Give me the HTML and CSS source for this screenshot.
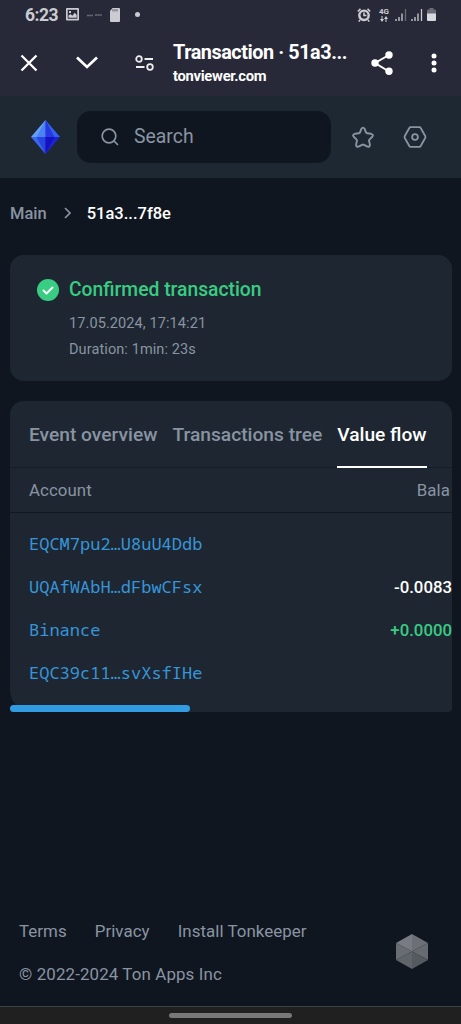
FILE: index.html
```html
<!DOCTYPE html>
<html lang="en">
<head>
  <meta charset="UTF-8" />
  <meta name="viewport" content="width=device-width, initial-scale=1.0"/>
  <title>Transaction · 51a3...7f8e</title>
  <link rel="stylesheet" href="styles.css">
</head>
<body>
  <div class="browser">
    <div class="status-bar">
      <span class="time">6:23</span>
      <svg class="picture" width="13" height="13" viewBox="0 0 13 13">
        <path fill="#cbccd2" fill-rule="evenodd" d="M1 0h11a1 1 0 0 1 1 1v10.500a1 1 0 0 1-1 1H1a1 1 0 0 1-1-1V1a1 1 0 0 1 1-1zM1.700 1.700v9h9.600v-9z"/>
        <path fill="#cbccd2" d="M2.500 9.800V7.500l2-1.500 1.800 1.800 2.500-3L10.700 7v2.800zM3 3h2v2H3z"/>
      </svg>
      <svg class="dashes" width="15" height="4" viewBox="0 0 15 4">
        <path d="M0 2.500h6M8 2h7" stroke="#6b6c77" stroke-width="1.500" stroke-dasharray="2 .3"/>
      </svg>
      <svg class="sd-card" width="10" height="14" viewBox="0 0 10 14">
        <path fill="#cbccd2" d="M2.500 0H9a1 1 0 0 1 1 1v12a1 1 0 0 1-1 1H1a1 1 0 0 1-1-1V3z"/>
        <path d="M3 1v2.500M5 1v2.500M7 1v2.500" stroke="#63646f" stroke-width="1"/>
      </svg>
      <span class="dot"></span>
      <div class="status-right">
        <svg width="14" height="14" viewBox="0 0 14 14" fill="none" stroke="#cbccd2">
          <circle cx="7" cy="7.300" r="4.700" stroke-width="2.400"/>
          <path d="M7 4.500v3h2.500M.8 3.500 3.500.9M13.200 3.500 10.500.9M3 12l-1.200 1.500M11 12l1.200 1.500" stroke-width="1.600"/>
        </svg>
        <div class="network">
          <span>4G</span>
          <svg width="8" height="6" viewBox="0 0 8 6" fill="#cbccd2">
            <path d="M1.500 0h1v3H4L2 6 0 3h1.500zM5.500 6h1V3H8L6 0 4 3h1.500z"/>
          </svg>
        </div>
        <svg width="12" height="12" viewBox="0 0 12 12" stroke="#cbccd2" stroke-width="1.300">
          <path d="M1 12v-2M4 12V8M7 12V4.500"/><path d="M10.500 12V0" stroke="#6b6c77"/>
        </svg>
        <svg width="12" height="12" viewBox="0 0 12 12" stroke="#cbccd2" stroke-width="1.300">
          <path d="M1 12v-2M4 12V8M7 12V4.500M10.500 12V0"/>
        </svg>
        <svg class="battery" width="9" height="13" viewBox="0 0 9 13">
          <path fill="#6b6c77" d="M2.500 0h4v1.500H8a1 1 0 0 1 1 1V6H0V2.500a1 1 0 0 1 1-1h1.500z"/>
          <path fill="#d8d9de" d="M0 5.500h9V12a1 1 0 0 1-1 1H1a1 1 0 0 1-1-1z"/>
        </svg>
      </div>
    </div>
    <div class="toolbar">
      <svg class="close" width="18" height="18" viewBox="0 0 18 18" stroke="#fff" stroke-width="2.300">
        <path d="M1.500 1.500l15 15M16.500 1.500l-15 15"/>
      </svg>
      <svg class="collapse" width="22" height="13" viewBox="0 0 22 13" fill="none" stroke="#fff" stroke-width="2.700">
        <path d="M1 1.500l10 9.500 10-9.500"/>
      </svg>
      <svg class="site-settings" width="19" height="16" viewBox="0 0 19 16" fill="none" stroke="#eeeef1" stroke-width="1.800">
        <circle cx="4" cy="4" r="2.800"/><circle cx="15" cy="12" r="2.800"/>
        <path d="M9.500 4H18M1 12h8.500"/>
      </svg>
      <div class="page-info">
        <div class="page-title">Transaction · 51a3...</div>
        <div class="page-host">tonviewer.com</div>
      </div>
      <svg class="share" width="22" height="24" viewBox="0 0 22 24" fill="#fff">
        <path d="M18 4 4 12l14 8.500" fill="none" stroke="#fff" stroke-width="2"/>
        <circle cx="18" cy="4" r="3.700"/><circle cx="4" cy="12" r="3.700"/><circle cx="18" cy="20.200" r="3.700"/>
      </svg>
      <svg class="more" width="6" height="20" viewBox="0 0 6 20" fill="#fff">
        <circle cx="3" cy="3" r="2.500"/><circle cx="3" cy="10" r="2.500"/><circle cx="3" cy="17" r="2.500"/>
      </svg>
    </div>
  </div>

  <header class="header">
    <svg class="logo" width="29" height="34" viewBox="0 0 29 34">
      <path fill="#66a0f5" d="M14.500 0v17H0z"/>
      <path fill="#3263f0" d="M14.500 0 29 17H14.500z"/>
      <path fill="#3768ef" d="M0 17h14.500v17z"/>
      <path fill="#1c25cd" d="M29 17H14.500v17z"/>
      <path fill="#4b82f5" d="M14.500 0v17h-9z"/>
      <path fill="#2538e2" d="M14.500 0v17h9z"/>
      <path fill="#2846df" d="M5.500 17h9v17z"/>
      <path fill="#1711c5" d="M23.500 17h-9v17z"/>
    </svg>
    <div class="search">
      <svg width="18" height="18" viewBox="0 0 18 18" fill="none" stroke="#8994a3" stroke-width="1.700" stroke-linecap="round">
        <circle cx="8" cy="8" r="6.800"/><path d="M13 13l3.500 3.500"/>
      </svg>
      <span>Search</span>
    </div>
    <svg class="star" width="24" height="23" viewBox="0 0 24 23" fill="none" stroke="#8994a3" stroke-width="1.900" stroke-linejoin="round">
      <path d="M10.400 2.800Q12 .4 13.600 2.800L15 6.400Q15.300 7.200 16.200 7.300L20.100 7.800Q22.900 8.500 21.300 10.800L18.400 13.600Q17.900 14.200 18.100 15L18.900 18.600Q19 21.300 16.500 20.700L13 18.800Q12 18.300 11 18.800L7.500 20.700Q5 21.300 5.100 18.600L5.900 15Q6.100 14.200 5.600 13.600L2.700 10.800Q1.100 8.500 3.900 7.800L7.800 7.300Q8.700 7.200 9 6.400Z"/>
    </svg>
    <svg class="settings" width="24" height="22" viewBox="0 0 24 22" fill="none" stroke="#8994a3" stroke-width="1.800" stroke-linejoin="round">
      <path d="M7.500 1.200h9q.8 0 1.200.8l4.500 8q.5 1 0 2l-4.500 8q-.4.800-1.200.8h-9q-.8 0-1.200-.8L1.800 12q-.5-1 0-2l4.500-8q.4-.8 1.200-.8z"/>
      <circle cx="12" cy="11" r="2.900"/>
    </svg>
  </header>

  <main class="content">
    <nav class="breadcrumbs">
      <span>Main</span>
      <svg width="7" height="12" viewBox="0 0 7 12" fill="none" stroke="#8994a3" stroke-width="1.700">
        <path d="M1 1l5 5-5 5"/>
      </svg>
      <span class="current">51a3...7f8e</span>
    </nav>

    <section class="card status-card">
      <svg class="check" width="22" height="22" viewBox="0 0 22 22">
        <circle cx="11" cy="11" r="11" fill="#39cc83"/>
        <path d="M6.500 11.500l3 3 6-6" fill="none" stroke="#fff" stroke-width="1.900" stroke-linecap="round" stroke-linejoin="round"/>
      </svg>
      <div>
        <h1>Confirmed transaction</h1>
        <p class="date">17.05.2024, 17:14:21</p>
        <p class="duration">Duration: 1min: 23s</p>
      </div>
    </section>

    <section class="card flow-card">
      <div class="tabs">
        <span class="tab">Event overview</span>
        <span class="tab">Transactions tree</span>
        <span class="tab active">Value flow</span>
      </div>
      <div class="table-head">
        <span>Account</span>
        <span>Bala</span>
      </div>
      <div class="table-body">
        <div class="row"><a>EQCM7pu2…U8uU4Ddb</a></div>
        <div class="row"><a>UQAfWAbH…dFbwCFsx</a><span class="amount">-0.0083</span></div>
        <div class="row"><a>Binance</a><span class="amount plus">+0.0000</span></div>
        <div class="row"><a>EQC39c11…svXsfIHe</a></div>
      </div>
      <div class="scrollbar"><div class="thumb"></div></div>
    </section>
  </main>

  <footer class="footer">
    <div>
      <div class="links">
        <a>Terms</a>
        <a>Privacy</a>
        <a>Install Tonkeeper</a>
      </div>
      <div class="copyright">© 2022-2024 Ton Apps Inc</div>
    </div>
    <svg class="gem" width="32" height="35" viewBox="0 0 32 35">
      <path fill="#787c82" d="M16 0v17.500L0 9z"/>
      <path fill="#6c7076" d="M16 0v17.500L32 9z"/>
      <path fill="#696d73" d="M0 9l16 8.500L0 26z"/>
      <path fill="#666a71" d="M32 9l-16 8.500L32 26z"/>
      <path fill="#5f636a" d="M0 26l16-8.500V35z"/>
      <path fill="#555960" d="M32 26l-16-8.500V35z"/>
    </svg>
  </footer>

  <div class="nav-bar"><div class="handle"></div></div>
</body>
</html>
```
FILE: styles.css
```css
* {
  box-sizing: border-box;
  margin: 0;
  padding: 0;
}

body {
  display: flex;
  flex-direction: column;
  height: 1024px;
  overflow: hidden;
  background-color: #10161f;
  color: #8994a3;
  font-family: Roboto, sans-serif;
  white-space: nowrap;
}

svg {
  display: block;
  flex-shrink: 0;
}

.browser {
  height: 96px;
  background-color: #282938;
  color: #fff;
}

.status-bar {
  display: flex;
  align-items: center;
  height: 29px;
  padding: 0 25px;
  color: #cbccd2;
}

.time {
  width: 41px;
  font-size: 17.5px;
  font-weight: 700;
  letter-spacing: -0.5px;
}

.dashes {
  margin-left: 8px;
}

.sd-card {
  margin-left: 8px;
}

.dot {
  width: 5px;
  height: 5px;
  margin-left: 15px;
  border-radius: 50%;
  background-color: #cbccd2;
}

.status-right {
  display: flex;
  align-items: center;
  gap: 4px;
  margin-left: auto;
}

.network {
  display: flex;
  flex-direction: column;
  align-items: center;
  width: 14px;
  margin-left: 2px;
  font-size: 8px;
  font-weight: 700;
  line-height: 8px;
}

.toolbar {
  display: flex;
  align-items: center;
  height: 67px;
  padding: 0 24px 0 20px;
}

.collapse {
  margin-left: 38px;
}

.site-settings {
  margin-left: 37px;
}

.page-info {
  flex: 1;
  margin-left: 19px;
}

.page-title {
  margin-top: 3px;
  font-size: 19.8px;
  font-weight: 700;
  line-height: 24px;
  letter-spacing: -0.43px;
}

.page-host {
  font-size: 14.8px;
  font-weight: 700;
  line-height: 22px;
  letter-spacing: -0.3px;
}

.more {
  margin-left: 38px;
}

.header {
  display: flex;
  align-items: center;
  height: 82px;
  padding: 0 34px 0 31px;
  background-color: #1e2832;
}

.search {
  display: flex;
  align-items: center;
  gap: 15px;
  width: 254px;
  height: 52px;
  margin-left: 17px;
  padding: 0 0 1px 24px;
  border-radius: 14px;
  background-color: #10161f;
  font-size: 19.4px;
}

.star {
  margin-left: 20px;
}

.settings {
  margin-left: auto;
}

.content {
  flex: 1;
  padding: 0 9px 0 10px;
}

.breadcrumbs {
  display: flex;
  align-items: center;
  height: 70px;
  font-size: 16.5px;
  font-weight: 500;
}

.breadcrumbs svg {
  margin: 0 16px 0 17px;
}

.current {
  color: #fff;
}

.card {
  border-radius: 14px;
  background-color: #1e2731;
}

.status-card {
  display: flex;
  gap: 10px;
  height: 126px;
  margin-top: 7px;
  padding: 22px 27px;
}

.check {
  margin-top: 2px;
}

h1 {
  color: #39cc83;
  font-size: 19.3px;
  font-weight: 500;
  line-height: 26px;
}

.date,
.duration {
  font-size: 14.5px;
  line-height: 26px;
  letter-spacing: 0.1px;
}

.date {
  margin-top: 8px;
}

.flow-card {
  margin-top: 20px;
  border-bottom-right-radius: 4px;
  border-bottom-left-radius: 22px;
}

.tabs {
  display: flex;
  gap: 15px;
  height: 67px;
  padding: 0 19px;
  border-bottom: 1px solid #151d27;
}

.tab {
  height: 67px;
  font-size: 19.2px;
  font-weight: 500;
  line-height: 67px;
}

.active {
  border-bottom: 2px solid #fff;
  color: #fff;
}

.table-head {
  display: flex;
  justify-content: space-between;
  height: 45px;
  padding: 0 2px 0 19px;
  border-bottom: 1px solid #111922;
  font-size: 16.8px;
  letter-spacing: 0.1px;
  line-height: 45px;
}

.table-body {
  padding: 9px 0 0 19px;
}

.row {
  display: flex;
  align-items: center;
  justify-content: space-between;
  height: 43px;
}

.row a {
  color: #3795da;
  font-family: "Noto Sans Mono", "DejaVu Sans Mono", monospace;
  font-size: 17px;
}

.amount {
  color: #fff;
  font-size: 16.8px;
  font-weight: 500;
}

.plus {
  color: #39cc83;
}

.scrollbar {
  margin-top: 11px;
}

.thumb {
  width: 180px;
  height: 7px;
  border-radius: 4px;
  background-color: #319ce2;
}

.footer {
  display: flex;
  justify-content: space-between;
  height: 101px;
  padding: 14px 33px 0 19px;
  font-size: 16.9px;
  letter-spacing: 0.05px;
}

.links {
  display: flex;
  gap: 28px;
  line-height: 24px;
}

.copyright {
  margin-top: 19px;
  letter-spacing: 0.12px;
  line-height: 24px;
}

.gem {
  margin-top: 15px;
}

.nav-bar {
  height: 18px;
  padding-top: 6px;
  border-top: 1px solid #3c4246;
  background-color: #202020;
}

.handle {
  width: 123px;
  height: 5px;
  margin: 0 auto;
  border-radius: 3px;
  background-color: #787878;
}
```
